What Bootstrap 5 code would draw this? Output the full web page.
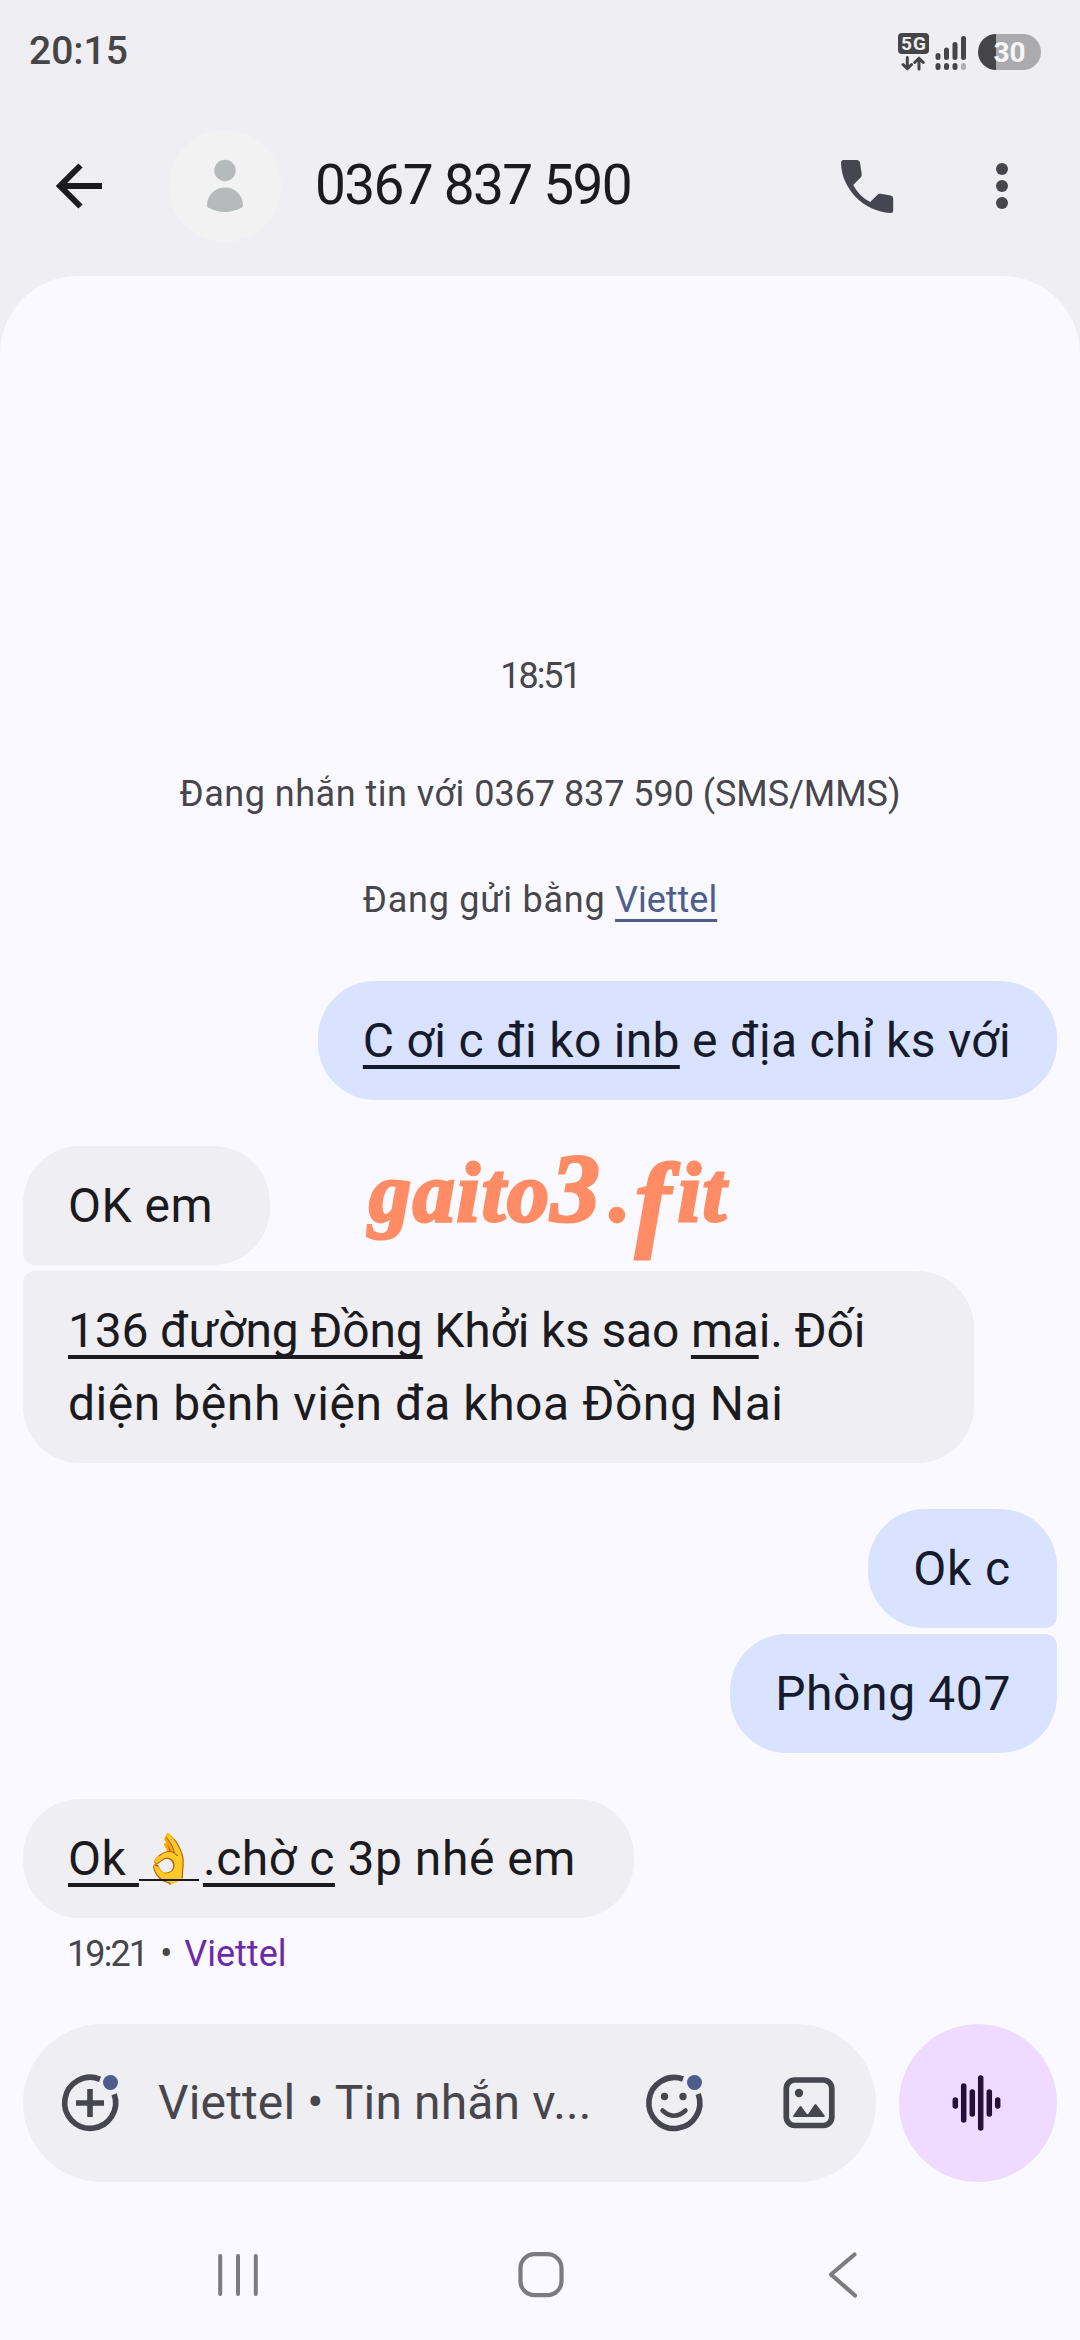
<!DOCTYPE html>
<html lang="vi">
<head>
<meta charset="utf-8">
<meta name="viewport" content="width=device-width, initial-scale=1">
<title>0367 837 590</title>
<link rel="stylesheet" href="https://cdn.jsdelivr.net/npm/bootstrap@5.3.0/dist/css/bootstrap.min.css">
<style>
  body { font-family: Roboto, "Noto Sans", sans-serif; background: #efeef3; color: #1b1b1f; margin: 0; }
  .screen { width: 1080px; height: 2340px; overflow: hidden; }
  svg { display: block; flex: none; }
  .status { height: 95px; padding: 8px 39px 0 29px; color: #454547; font-size: 39px; font-weight: 500; }
  .appbar { height: 181px; padding: 0 50px; }
  .avatar { width: 112px; height: 112px; background: #f2f2f2; margin-left: 61px; }
  .contact { font-size: 55px; letter-spacing: -1.7px; margin-left: 34px; line-height: 1; }
  .sheet { background: #faf9ff; border-radius: 78px 78px 0 0; height: 2064px; padding: 376px 23px 0; }
  .note { font-size: 36px; line-height: 48px; color: #46464c; white-space: pre; }
  .note a { color: #4d5d8c; text-decoration-thickness: 3px; text-underline-offset: 7px; text-decoration-skip-ink: none; }
  .bubble { background: #efeef3; border-radius: 57px; padding: 23px 46px 23px 45px; font-size: 48px; line-height: 73px; white-space: pre; }
  .bubble.sent { background: #d9e2ff; color: #151b2b; align-self: flex-end; }
  .bubble.got { align-self: flex-start; }
  .bubble.head-got { border-bottom-left-radius: 12px; }
  .bubble.tail-got { border-top-left-radius: 12px; }
  .bubble.head-sent { border-bottom-right-radius: 12px; }
  .bubble.tail-sent { border-top-right-radius: 12px; }
  .bubble u { text-decoration-thickness: 4px; text-underline-offset: 8px; text-decoration-skip-ink: none; }
  .gap-big { margin-top: 46px; }
  .gap-small { margin-top: 6px; }
  .emoji { display: inline-block; width: 60px; height: 73px; position: relative; text-align: center; vertical-align: top; margin-right: 4px; }
  .emoji::after { content: ""; position: absolute; left: 0; right: 0; top: 57px; height: 2px; background: #1b1b1f; }
  .stamp { position: absolute; left: 369px; top: 1133px; font: italic 700 84px/120px "Liberation Serif", serif; color: #ff8c64; -webkit-text-stroke: 3px #ff8c64; letter-spacing: 1.8px; white-space: nowrap; }
  .stamp .tall { font-size: 98px; line-height: 1px; }
  .stamp .dot { margin: 0 3px 0 8px; }
  .stamp .drop { display: inline-block; font-size: 106px; line-height: 1px; transform: translateY(15px); margin-right: 5px; }
  .composer { height: 158px; gap: 23px; }
  .field { background: #efeef3; border-radius: 79px; width: 853px; padding: 0 37px 0 35px; }
  .hint { font-size: 48px; letter-spacing: .15px; color: #46464c; margin-left: 36px; width: 469px; white-space: pre; }
  .mic { width: 158px; height: 158px; background: #eedbff; }
  .sysnav { height: 158px; padding: 27px 184px 0 185px; }
</style>
</head>
<body>
<div class="screen position-relative">
  <header>
    <div class="status d-flex align-items-center justify-content-between">
      <span>20:15</span>
      <svg width="143" height="40" viewBox="898 31 143 40" fill="#454547">
        <rect x="898" y="32" width="31" height="21" rx="4"/>
        <text x="913.5" y="49" text-anchor="middle" font-size="19" font-weight="700" fill="#efeef3" textLength="25">5G</text>
        <g fill="none" stroke="#454547" stroke-width="3" stroke-linecap="round" stroke-linejoin="round">
          <path d="M907.300 56.500V67.500M903 63.500l4.300 4.300 4.300-4.300M919 68V57.500M914.700 61.500l4.300-4.300 4.300 4.300"/>
        </g>
        <g stroke="#454547" stroke-width="5" stroke-linecap="round">
          <path d="M938 54.500v2M946.500 49v7.500M955 43.500v13M963.500 37.500v19M938 64.500v2M946.500 64.500v2M955 64.500v2"/>
          <path d="M963.500 64.500v2" stroke="#b0b0b3"/>
        </g>
        <path d="M996 33v36a18 18 0 0 1 0-36z"/>
        <path d="M996 33h27a18 18 0 0 1 0 36h-27z" fill="#ababae"/>
        <text x="1009.500" y="61" text-anchor="middle" font-size="28" font-weight="700" fill="#fff" fill-opacity=".93">30</text>
      </svg>
    </div>
    <nav class="appbar d-flex align-items-center" aria-label="Cuộc trò chuyện">
      <svg width="58" height="58" viewBox="50 157 58 58" fill="none" stroke="#1b1b1f" stroke-width="6"><path d="M102 186H60M80.500 165.500L60 186l20.500 20.500"/></svg>
      <div class="avatar rounded-circle d-flex align-items-center justify-content-center">
        <svg width="40" height="56" viewBox="0 0 40 56" fill="#b7baba"><circle cx="20" cy="12.500" r="10.700"/><path d="M2 47.500C2 37 10 29.500 20 29.500S38 37 38 47.500q0 2-2 2.500Q20 58 4 50q-2-.5-2-2.500z"/></svg>
      </div>
      <div class="contact">0367 837 590</div>
      <svg class="ms-auto" width="54" height="54" viewBox="840 159 54 54" fill="#454650"><path d="M843.500 160h13.500q2.500 0 3 2.500l1.700 11.500q.3 2-1 3.500l-7.500 7.500q6 11.500 17 17l7-7q1.500-1.500 3.500-1.200l10 1.700q2.500.5 2.500 3v12q0 2.500-2.700 2.500C864 211.500 841.500 189 841 163q0-3 2.500-3z" /></svg>
      <svg width="16" height="50" viewBox="994 161 16 50" fill="#46464c" style="margin-left:100px;margin-right:20px"><circle cx="1002" cy="169" r="6"/><circle cx="1002" cy="186" r="6"/><circle cx="1002" cy="203" r="6"/></svg>
    </nav>
  </header>

  <main class="sheet d-flex flex-column">
    <div class="note text-center" style="letter-spacing:-2px">18:51</div>
    <div class="note text-center" style="margin-top:70px"><span style="letter-spacing:.5px">Đang nhắn tin với </span><span style="letter-spacing:-.05px">0367 837 590 (SMS/MMS)</span></div>
    <div class="note text-center" style="margin-top:58px"><span style="letter-spacing:.75px">Đang gửi bằng </span><a href="#">Viettel</a></div>

    <div class="bubble sent" style="margin-top:57px;letter-spacing:.3px"><u>C ơi c đi ko inb</u> e địa chỉ ks với</div>
    <div class="bubble got head-got gap-big" style="letter-spacing:.5px;width:247px">OK em</div>
    <div class="bubble got tail-got gap-small" style="width:951px"><span style="letter-spacing:-.18px"><u>136 đường Đồng</u> Khởi ks sao <u>ma</u>i. Đối</span><br><span style="letter-spacing:.55px">diện bệnh viện đa khoa Đồng Nai</span></div>
    <div class="bubble sent head-sent gap-big" style="letter-spacing:.85px">Ok c</div>
    <div class="bubble sent tail-sent gap-small" style="letter-spacing:.6px">Phòng 407</div>
    <div class="bubble got gap-big" style="letter-spacing:.55px;width:611px"><u>Ok </u><span class="emoji">👌</span><u>.chờ c</u> 3p nhé em</div>
    <div class="note" style="margin:12px 0 0 44px"><span style="letter-spacing:-1.9px">19:21</span><span style="margin:0 12px 0 13px">•</span><span style="color:#6b2ba8">Viettel</span></div>

    <div class="composer d-flex gap-big">
      <div class="field d-flex align-items-center">
        <svg width="64" height="64" viewBox="59 2071 64 64" fill="none" stroke="#46464f" stroke-width="5.600"><path d="M101 2079.300A25.500 25.500 0 1 0 115.200 2094.300M91 2089v28M77 2103h28"/><circle cx="111.500" cy="2082.500" r="7.500" fill="#4d5d8c" stroke="none"/></svg>
        <div class="hint">Viettel • Tin nhắn v...</div>
        <svg style="margin-left:15px" width="64" height="64" viewBox="642 2071 64 64" fill="none" stroke="#46464f" stroke-width="5.600"><path d="M683 2079A25.500 25.500 0 1 0 698.200 2094"/><path d="M662.500 2110.500q11.500 10.500 23 0" stroke-width="4.500" stroke-linecap="round"/><g stroke="none"><circle cx="664.500" cy="2096.500" r="3.700" fill="#46464f"/><circle cx="683" cy="2096.500" r="3.700" fill="#46464f"/><circle cx="694.500" cy="2082.500" r="7.500" fill="#4d5d8c"/></g></svg>
        <svg class="ms-auto" width="60" height="60" viewBox="779 2073 60 60" fill="#46464f"><rect x="786.300" y="2080" width="45.500" height="45.500" rx="8.500" fill="none" stroke="#46464f" stroke-width="5.700"/><circle cx="799" cy="2093" r="4.200"/><path d="M794 2117q-1.500-.3-.7-1.600l6.300-8.800q.9-1 1.800 0l5.300 7.200q.8.800 1.600 0l6.300-9.400q.9-1 1.800 0l8.200 11q.8 1.300-.7 1.600z"/></svg>
      </div>
      <div class="mic rounded-circle d-flex align-items-center justify-content-center">
        <svg width="52" height="60" viewBox="952 2073 52 60" stroke="#260f3b" stroke-width="5.500" stroke-linecap="round"><path d="M955.300 2100v6M963.700 2086v34M972.300 2092v22M980.700 2078v50M989.300 2092v22M997.700 2100v6"/></svg>
      </div>
    </div>

    <div class="sysnav d-flex align-items-center justify-content-between">
      <svg width="60" height="60" viewBox="208 2245 60 60" stroke="#7b7b80" stroke-width="4" stroke-linecap="round"><path d="M220.200 2256v38M238 2256v38M255.800 2256v38"/></svg>
      <svg width="60" height="60" viewBox="510 2245 60 60" fill="none" stroke="#7b7b80" stroke-width="4.200"><rect x="519.500" y="2254.200" width="41" height="41" rx="14"/></svg>
      <svg width="60" height="60" viewBox="813 2245 60 60" fill="none" stroke="#7b7b80" stroke-width="4.200" stroke-linecap="round" stroke-linejoin="round"><path d="M854.500 2254.500L831 2274.500l24 21"/></svg>
    </div>
  </main>
  <div class="stamp">gaito<span class="tall">3</span><span class="dot">.</span><span class="drop">f</span>it</div>
</div>
<script src="https://cdn.jsdelivr.net/npm/bootstrap@5.3.0/dist/js/bootstrap.bundle.min.js"></script>
</body>
</html>
